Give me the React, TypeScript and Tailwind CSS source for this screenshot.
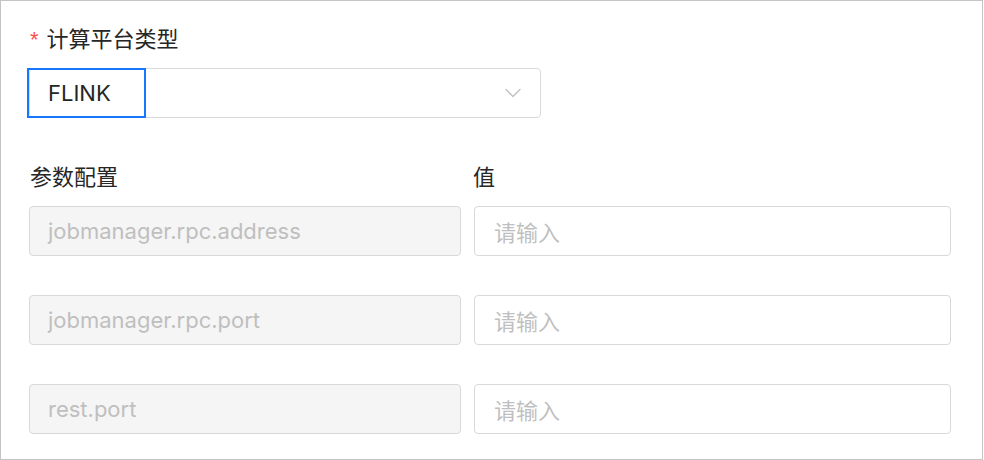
import React from "react";

const latin = 'Inter, "Noto Sans CJK SC", sans-serif';
const cjk = '"Noto Sans CJK SC", Inter, sans-serif';

const params = ["jobmanager.rpc.address", "jobmanager.rpc.port", "rest.port"];

function Chevron() {
  return (
    <svg width="16" height="10" viewBox="0 0 16 10" fill="none">
      <path d="M1 1.5 L8 8.5 L15 1.5" stroke="#bfbfbf" strokeWidth="1.3" strokeLinejoin="round" strokeLinecap="round" />
    </svg>
  );
}

export default function App() {
  return (
    <div className="w-[983px] h-[460px] border border-[#c4c4c4] bg-white box-border overflow-hidden">
      <div className="pl-[28px] pt-[21px]">
        {/* platform type field */}
        <div className="flex items-center h-[30px] text-[22px] text-[#262626]" style={{ fontFamily: cjk }}>
          <span className="text-[#ff4d4f] text-[22px] mr-[8px] ml-[1px] leading-none mt-[6px]" style={{ fontFamily: '"Liberation Sans", sans-serif' }}>*</span>
          <span className="leading-[30px]">计算平台类型</span>
        </div>
        <div className="relative mt-[16px] w-[512px] h-[50px] border border-[#d9d9d9] rounded-[4px] bg-white flex items-center justify-between pl-[18px] pr-[19px]">
          <span className="text-[22px] text-[#262626] relative z-10" style={{ fontFamily: latin }}>FLINK</span>
          <Chevron />
          <div className="absolute left-[-3px] top-[-1px] w-[119px] h-[50px] border-2 border-[#1677ff]" />
        </div>

        {/* parameter table */}
        <div className="mt-[42px] flex gap-[13px] text-[22px] text-[#262626] leading-[30px]" style={{ fontFamily: cjk }}>
          <div className="w-[432px] pl-[1px]">参数配置</div>
          <div className="w-[477px] -ml-[1px]">值</div>
        </div>
        <div className="mt-[16px] flex flex-col gap-[39px]">
          {params.map((p) => (
            <div key={p} className="flex gap-[13px]">
              <div
                className="w-[432px] h-[50px] rounded-[4px] border border-[#d9d9d9] bg-[#f5f5f5] flex items-center pl-[18px] text-[22px] text-[#bfbfbf]"
                style={{ fontFamily: latin }}
              >
                {p}
              </div>
              <div
                className="w-[477px] h-[50px] rounded-[4px] border border-[#d9d9d9] bg-white flex items-center pl-[19px] text-[22px] text-[#bfbfbf]"
                style={{ fontFamily: cjk }}
              >
                请输入
              </div>
            </div>
          ))}
        </div>
      </div>
    </div>
  );
}
